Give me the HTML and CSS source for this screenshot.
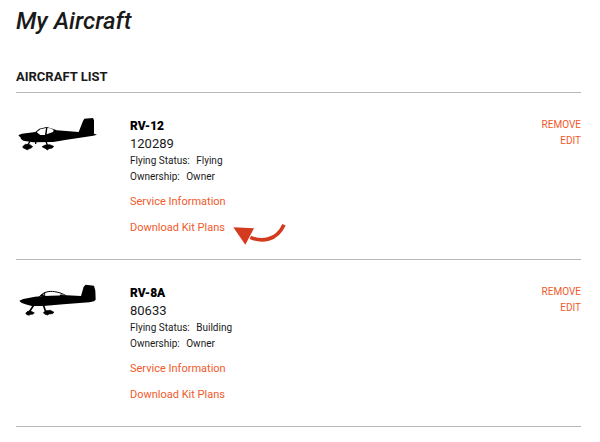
FILE: index.html
```
<!DOCTYPE html>
<html lang="en">
<head>
    <meta charset="UTF-8">
    <meta name="viewport" content="width=device-width, initial-scale=1.0">
    <title>My Aircraft</title>
    <link rel="stylesheet" href="styles.css">
</head>
<body>
<main class="page">
    <h1>My Aircraft</h1>
    <h2>AIRCRAFT LIST</h2>
    <ul class="aircraft-list">
        <li class="aircraft">
            <svg class="plane" viewBox="18 21 261 123" role="img" aria-label="RV-12">
                <path d="M26 75L36 71L76 66L88 56L110 51L130 57L140 61L206 66L219 33L223 26L249 24L252 31V71L261 74L250 77L170 89L130 96L70 97L40 92L33 87L31 81L26 78Z"/>
                <path fill="#fff" d="M80 67L91 58L108 54L105 75L91 75Z"/>
                <path fill="#fff" d="M112 54L121 55L131 60L129 66L110 73Z"/>
                <path fill="none" stroke="#000" stroke-width="4" d="M60 94L51 108M108 94L113 109M77 95V102"/>
                <path stroke="#000" stroke-width="2" d="M38 110L46 103L60 104L68 110L62 115L55 117L52 120L47 117L40 114ZM96 110L106 105L119 104L131 109L127 114L117 116L112 120L107 116Z"/>
            </svg>
            <div class="details">
                <h3>RV-12</h3>
                <p class="serial">120289</p>
                <p class="info">Flying Status: <span>Flying</span></p>
                <p class="info">Ownership: <span>Owner</span></p>
                <p class="link"><a href="#">Service Information</a></p>
                <p class="link">
                    <a class="plans" href="#">Download Kit Plans
                        <svg class="arrow" viewBox="22 26 162 69" aria-hidden="true">
                            <path fill="none" stroke="#d43a1e" stroke-width="11" d="M74 69C108 84 153 79 175 31"/>
                            <path fill="#d43a1e" d="M23 39L85 42L59 91Z"/>
                        </svg>
                    </a>
                </p>
            </div>
            <div class="actions">
                <a href="#">REMOVE</a>
                <a href="#">EDIT</a>
            </div>
        </li>
        <li class="aircraft">
            <svg class="plane" viewBox="18 18 261 123" role="img" aria-label="RV-8A">
                <path d="M28 68L40 63L75 56L100 54L170 52L213 54L221 26L227 20L252 23L256 38L257 65L252 70L238 73L160 79L100 84L65 84L46 79L34 74Z"/>
                <path fill="none" stroke="#000" stroke-width="3" d="M88 56C99 43 116 38 134 41C148 43 158 47 168 53M104 43V56"/>
                <path d="M88 55L99 47L103 55ZM149 54L152 49L167 53Z"/>
                <path fill="none" stroke="#000" stroke-width="5" d="M71 82L57 103M101 83L107 101"/>
                <path stroke="#000" stroke-width="2" d="M47 106L53 100L64 100L73 105L67 109L60 109L58 112L51 110ZM100 104L108 98L121 97L132 103L127 107L117 108L113 111L105 109Z"/>
            </svg>
            <div class="details">
                <h3>RV-8A</h3>
                <p class="serial">80633</p>
                <p class="info">Flying Status: <span>Building</span></p>
                <p class="info">Ownership: <span>Owner</span></p>
                <p class="link"><a href="#">Service Information</a></p>
                <p class="link"><a href="#">Download Kit Plans</a></p>
            </div>
            <div class="actions">
                <a href="#">REMOVE</a>
                <a href="#">EDIT</a>
            </div>
        </li>
    </ul>
</main>
</body>
</html>
```
FILE: styles.css
```
body {
    margin: 0;
    background: #fff;
    color: #1a1a1a;
    font-family: Roboto, "Liberation Sans", sans-serif;
}

.page {
    padding: 7px 19px 0 16px;
}

h1, h2, h3, p, ul {
    margin: 0;
    padding: 0;
}

h1 {
    font-size: 24px;
    line-height: 28px;
    font-weight: 500;
    font-style: italic;
}

h2 {
    margin-top: 33px;
    padding-bottom: 6px;
    border-bottom: 1px solid #b8b8b8;
    font-size: 13px;
    line-height: 18px;
    font-weight: 700;
}

.aircraft-list {
    list-style: none;
}

.aircraft {
    display: flex;
    padding: 24px 0 22px;
    border-bottom: 1px solid #b8b8b8;
}

.plane {
    width: 87px;
    height: 41px;
    margin-right: 27px;
}

.details {
    flex: 1;
}

h3 {
    font-size: 12px;
    line-height: 18px;
    font-weight: 900;
    color: #000;
}

.serial {
    font-size: 13px;
    line-height: 18px;
}

.info {
    font-size: 10px;
    line-height: 16px;
}

.info span {
    margin-left: 4px;
}

.link {
    margin-top: 8px;
    font-size: 11px;
    line-height: 18px;
}

a {
    color: #f15a2b;
    text-decoration: none;
}

.plans {
    position: relative;
}

/* hangs off the end of the link without making the row taller */
.arrow {
    position: absolute;
    left: 100%;
    top: 2px;
    width: 54px;
    height: 23px;
    margin-left: 8px;
}

.actions {
    display: flex;
    flex-direction: column;
    align-items: flex-end;
    font-size: 10px;
    line-height: 16px;
}
```
